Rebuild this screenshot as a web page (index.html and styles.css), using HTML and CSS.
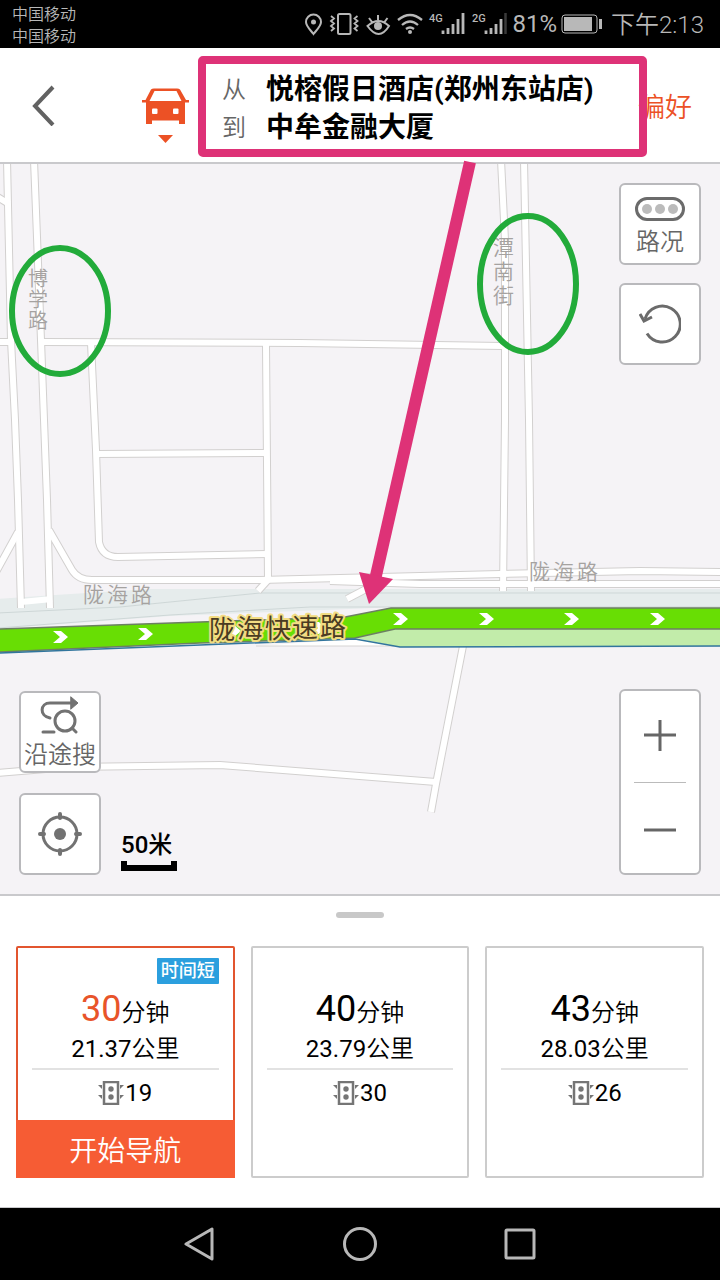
FILE: index.html
```
<!DOCTYPE html>
<html lang="zh-CN">
<head>
  <meta charset="UTF-8" />
  <meta name="viewport" content="width=device-width, initial-scale=1" />
  <title>路线规划</title>
  <link rel="stylesheet" href="styles.css">
</head>
<body>

  <div class="status-bar">
    <div class="carriers">
      <span>中国移动</span>
      <span>中国移动</span>
    </div>
    <div class="status-right">
      <svg class="status-icons" width="204" height="30" viewBox="305 9 204 30" fill="none" stroke="#b8b8b8" stroke-width="2">
        <!-- location -->
        <path d="M314.500 34C311 29.500 307 26 307 22a7.500 7.500 0 0 1 15 0c0 4-4 7.500-7.500 12z"/>
        <circle cx="314.500" cy="22" r="2.500" fill="#b8b8b8" stroke="none"/>
        <!-- vibrate -->
        <rect x="339" y="14" width="12.500" height="20" rx="1.500"/>
        <path d="M332 16l3 2.500-3 2.500 3 2.500-3 2.500 3 2.500-3 2.500M358.500 16l-3 2.500 3 2.500-3 2.500 3 2.500-3 2.500 3 2.500" stroke-width="1.800"/>
        <!-- eye protection -->
        <path d="M368.500 26q11-10 21.500 0-10 16-21.500 0zM379 15v5M370 18l3 4M388.500 18l-3 4"/>
        <circle cx="379" cy="26" r="4" fill="#b8b8b8" stroke="none"/>
        <!-- wifi -->
        <path d="M399 20q12-10 24 0M403 25q8-7 16 0M407 29q4-3 8 0" stroke-width="2.300"/>
        <circle cx="411" cy="32" r="2" fill="#b8b8b8" stroke="none"/>
        <!-- signals -->
        <path d="M444 34v-3.500M449 34v-6M454 34v-10M459 34v-15M464 34V13M487 34v-3.500M492 34v-6M497 34v-10M502 34v-15" stroke-width="2.800"/>
        <path d="M506.500 34V13" stroke="#3a3a3a" stroke-width="2.500"/>
        <text x="430" y="22">4G</text>
        <text x="473" y="22">2G</text>
      </svg>
      <span>81%</span>
      <svg class="battery" width="42" height="20" viewBox="0 0 42 20">
        <rect x="1" y="1" width="35" height="18" rx="3" fill="none" stroke="#b8b8b8"/>
        <rect x="3" y="3" width="28" height="14" fill="#b8b8b8"/>
        <path d="M39.500 5v10" stroke="#b8b8b8" stroke-width="3"/>
      </svg>
      <span class="clock">下午2:13</span>
    </div>
  </div>

  <header class="top-bar">
    <button class="icon-btn back" aria-label="返回">
      <svg width="24" height="42" viewBox="0 0 24 42"><path d="M21 3L3 22l18 19" fill="none" stroke="#626262" stroke-width="4"/></svg>
    </button>
    <button class="icon-btn" aria-label="驾车">
      <svg width="48" height="76" viewBox="0 0 48 76" fill="#ec5125">
        <path d="M9 22.500Q10 21.500 12 21.500H35q2 0 3 1L44 33h3v2.500H43V57H37V53.500H10V57H4V35.500H0V33H3.500zM12.500 24L7.500 34H39.500L34.500 24z" fill-rule="evenodd"/>
        <rect x="10" y="41.500" width="5.500" height="5.500" rx="1" fill="#fff"/>
        <rect x="31" y="41.500" width="5.500" height="5.500" rx="1" fill="#fff"/>
        <path d="M16 68H31L23.500 76z"/>
      </svg>
    </button>
    <dl class="address">
      <dt>从</dt><dd>悦榕假日酒店(郑州东站店)</dd>
      <dt>到</dt><dd>中牟金融大厦</dd>
    </dl>
    <button class="preference">偏好</button>
  </header>

  <main class="map">
    <svg class="map-canvas" viewBox="0 164 720 730" preserveAspectRatio="xMidYMid slice">
      <defs>
        <g id="roads" fill="none" stroke-linejoin="round">
          <path d="M-4 196L9 204"/>
          <path d="M7 160L11 340L15 420L18 500L21 608"/>
          <path d="M34 160L41 340L44 420L47 500L50 608"/>
          <path d="M-4 342H11M42 342L300 343L503 346"/>
          <path d="M91 343L96 450L99 542Q102 557 118 557L267 554"/>
          <path d="M266 345L268 580L258 591"/>
          <path d="M97 454L266 453"/>
          <path d="M-4 572L18 532M49 530L72 570Q78 580 92 580L260 580L500 574L640 571L724 572"/>
          <path d="M330 581L420 584H724"/>
          <path d="M501 160L505 240L505 420L503 591"/>
          <path d="M524 160L529 420L531 591"/>
          <path d="M347 599L366 589"/>
          <path d="M463 646L436 784L431 812"/>
          <path d="M-4 773L70 767L220 765L436 782"/>
        </g>
        <path id="chevron" d="M-7-6H1L8 0 1 6H-7L0 0z" fill="#fff"/>
      </defs>

      <rect x="0" y="164" width="720" height="730" fill="#f5f3f6"/>

      <!-- elevated road -->
      <path d="M-2 599L55 595L150 589H724V607H400L170 616L-2 629z" fill="#e6ecec"/>
      <path d="M-2 613L120 607L260 593L724 593M-2 628L170 615L310 607H724" fill="none" stroke="#ced7d7"/>

      <use href="#roads" stroke="#d2d0cf" stroke-width="8"/>
      <use href="#roads" stroke="#fff" stroke-width="6"/>
      <path d="M21 602L52 599" stroke="#fff" stroke-width="6"/>
      <path d="M256 646L355 639H460V646z" fill="#fff"/>
      <path d="M256 646H460" stroke="#d6d4d3"/>

      <!-- route -->
      <path d="M355 638L396 629H724V646L400 647z" fill="#c2ecaa"/>
      <path d="M-2 629L200 622L345 617L391 608H724V629H395L355 638L200 643L-2 652z" fill="#68de04" stroke="#6c7f63" stroke-width="1.500"/>
      <path d="M-2 653L200 645L355 639L400 647L724 646" fill="none" stroke="#31759d" stroke-width="1.500"/>
      <use href="#chevron" x="60" y="637"/>
      <use href="#chevron" x="145" y="634"/>
      <use href="#chevron" x="233" y="631"/>
      <use href="#chevron" x="318" y="628"/>
      <use href="#chevron" x="400" y="619"/>
      <use href="#chevron" x="486" y="619"/>
      <use href="#chevron" x="571" y="619"/>
      <use href="#chevron" x="657" y="619"/>

      <text class="road-name" x="83 107 131" y="602">陇海路</text>
      <text class="road-name" x="529 553 577" y="579">陇海路</text>
      <text class="road-name small" x="28 28 28" y="286 307 328">博学路</text>
      <text class="road-name" x="493 493 493" y="255 279 303">潭南街</text>
      <text class="highway-name" x="209 237 265 292 320" y="639 638 638 637 636">陇海快速路</text>
    </svg>

    <div class="left-tools">
      <button class="map-btn labelled">
        <svg width="40" height="38" viewBox="0 0 40 38" fill="none" stroke="#727272" stroke-width="3" stroke-linecap="round">
          <path d="M10 22C-1 20 0 7 10 7H31M3 36H14"/>
          <path d="M31 1L38 7L31 13z" fill="#727272" stroke-width="1"/>
          <circle cx="25" cy="25" r="10"/>
          <path d="M32 32L36 36"/>
        </svg>
        沿途搜
      </button>
      <button class="map-btn" aria-label="定位">
        <svg width="44" height="44" viewBox="0 0 44 44" fill="none" stroke="#727272" stroke-width="3" stroke-linecap="round">
          <circle cx="22" cy="22" r="17"/>
          <circle cx="22" cy="22" r="6" fill="#727272" stroke="none"/>
          <path d="M22 2v4M22 38v4M2 22h4M38 22h4" stroke-width="4"/>
        </svg>
      </button>
    </div>

    <div class="scale">
      <span>50米</span>
      <div class="scale-line"></div>
    </div>

    <div class="right-tools">
      <button class="map-btn labelled traffic">
        <svg width="50" height="24" viewBox="0 0 50 24">
          <rect x="1.500" y="1.500" width="47" height="21" rx="10.500" fill="none" stroke="#6b6b6b" stroke-width="3"/>
          <circle cx="12" cy="12" r="5" fill="#bbb"/>
          <circle cx="25" cy="12" r="5" fill="#bbb"/>
          <circle cx="38" cy="12" r="5" fill="#bbb"/>
        </svg>
        路况
      </button>
      <button class="map-btn" aria-label="刷新">
        <svg width="42" height="42" viewBox="0 0 42 42" fill="none" stroke="#6b6b6b" stroke-width="3">
          <path d="M8 30.500A18 18 0 1 0 6 16"/>
          <path d="M1 11L5 18L13 14"/>
        </svg>
      </button>
      <div class="zoom">
        <button class="icon-btn" aria-label="放大">
          <svg width="32" height="32" viewBox="0 0 32 32"><path d="M0 15H32M16 0V31" stroke="#666" stroke-width="3"/></svg>
        </button>
        <button class="icon-btn" aria-label="缩小">
          <svg width="32" height="32" viewBox="0 0 32 32"><path d="M0 18H32" stroke="#666" stroke-width="3"/></svg>
        </button>
      </div>
    </div>
  </main>

  <section class="panel">
    <div class="handle"></div>
    <div class="routes">
      <article class="route active">
        <span class="tag">时间短</span>
        <div class="summary">
          <p class="time"><strong>30</strong><span class="unit">分钟</span></p>
          <p class="distance">21.37<span class="unit">公里</span></p>
          <p class="lights"><svg width="26" height="24" viewBox="0 0 26 24"><use href="#light"/></svg>19</p>
        </div>
        <button class="start">开始导航</button>
      </article>
      <article class="route">
        <div class="summary">
          <p class="time"><strong>40</strong><span class="unit">分钟</span></p>
          <p class="distance">23.79<span class="unit">公里</span></p>
          <p class="lights"><svg width="26" height="24" viewBox="0 0 26 24"><use href="#light"/></svg>30</p>
        </div>
      </article>
      <article class="route">
        <div class="summary">
          <p class="time"><strong>43</strong><span class="unit">分钟</span></p>
          <p class="distance">28.03<span class="unit">公里</span></p>
          <p class="lights"><svg width="26" height="24" viewBox="0 0 26 24"><use href="#light"/></svg>26</p>
        </div>
      </article>
    </div>
    <svg class="symbols" width="0" height="0">
      <defs>
        <g id="light" fill="#757575">
          <rect x="6" y="1" width="14" height="22" fill="none" stroke="#757575" stroke-width="2.500"/>
          <circle cx="13" cy="8" r="2.700"/>
          <circle cx="13" cy="16" r="2.700"/>
          <path d="M0 4h4v4zM0 14h4v4zM26 4h-4v4zM26 14h-4v4z"/>
        </g>
      </defs>
    </svg>
  </section>

  <nav class="nav-bar">
    <button class="icon-btn" aria-label="后退">
      <svg width="34" height="34" viewBox="0 0 34 34"><path d="M29 2V32L3 17z"/></svg>
    </button>
    <button class="icon-btn" aria-label="主屏幕">
      <svg width="34" height="34" viewBox="0 0 34 34"><circle cx="17" cy="17" r="15.500"/></svg>
    </button>
    <button class="icon-btn" aria-label="最近任务">
      <svg width="34" height="34" viewBox="0 0 34 34"><rect x="3" y="3" width="28" height="28" rx="1"/></svg>
    </button>
  </nav>

  <!-- hand-drawn marks on top of the screen -->
  <svg class="marks" viewBox="0 0 720 1280" preserveAspectRatio="xMidYMin meet">
    <rect x="202" y="60" width="441" height="93" rx="1" fill="none" stroke="#de3277" stroke-width="8"/>
    <path d="M470 162L375 580" stroke="#de3277" stroke-width="12"/>
    <path d="M359 572L393 579L369 604z" fill="#de3277"/>
    <ellipse cx="60" cy="311" rx="48" ry="63" fill="none" stroke="#22ab3a" stroke-width="6"/>
    <ellipse cx="528" cy="284" rx="48" ry="68" fill="none" stroke="#22ab3a" stroke-width="6"/>
  </svg>

</body>
</html>
```
FILE: styles.css
```
* {
  box-sizing: border-box;
}

body {
  position: relative;
  display: flex;
  flex-direction: column;
  min-height: 100vh;
  margin: 0;
  background: #fff;
  color: #000;
  font-family: Roboto, "Noto Sans CJK SC", sans-serif;
  font-size: 24px;
}

button {
  margin: 0;
  padding: 0;
  border: none;
  background: none;
  color: inherit;
  font: inherit;
  cursor: pointer;
}

svg {
  display: block;
  flex-shrink: 0;
}

.icon-btn {
  display: flex;
  align-items: center;
  justify-content: center;
}

/* status bar */
.status-bar {
  display: flex;
  justify-content: space-between;
  align-items: center;
  height: 48px;
  padding: 0 16px 0 12px;
  background: #000;
  color: #b8b8b8;
}

.carriers {
  display: flex;
  flex-direction: column;
  padding-top: 4px;
  font-size: 16px;
  font-weight: 350;
  line-height: 22px;
}

.status-right {
  display: flex;
  align-items: center;
  gap: 4px;
  line-height: 30px;
}

.status-icons text {
  fill: #b8b8b8;
  stroke: none;
  font-size: 11px;
  font-weight: 500;
}

.battery {
  margin-right: 4px;
}

.clock {
  padding-top: 2px;
  font-weight: 350;
}

/* header */
.top-bar {
  display: grid;
  grid-template-columns: 78px 48px 1fr auto;
  gap: 32px;
  align-items: center;
  height: 116px;
  padding: 0 28px 0 32px;
  border-bottom: 2px solid #c9c9cc;
}

.back {
  justify-content: flex-start;
}

.address {
  display: grid;
  grid-template-columns: 24px 1fr;
  column-gap: 20px;
  margin: 0;
  padding-top: 8px;
  line-height: 38px;
}

.address dt {
  color: #666;
  font-weight: 350;
}

.address dd {
  margin: 0;
  font-size: 28px;
  font-weight: 700;
  white-space: nowrap;
}

.preference {
  color: #ec5125;
  font-size: 27px;
  font-weight: 350;
}

/* map */
.map {
  position: relative;
  display: flex;
  flex: 1;
  min-height: 600px;
  padding: 19px;
  background: #f5f3f6;
}

.map-canvas {
  position: absolute;
  inset: 0;
  width: 100%;
  height: 100%;
}

.road-name {
  fill: #a5a2a0;
  font-size: 21px;
  font-weight: 350;
}

.road-name.small {
  font-size: 20px;
}

.highway-name {
  fill: #4a3b22;
  stroke: #f2dc83;
  stroke-width: 4px;
  stroke-linejoin: round;
  paint-order: stroke;
  font-size: 26px;
}

.left-tools,
.right-tools,
.scale {
  position: relative;
  display: flex;
  flex-direction: column;
}

.left-tools {
  justify-content: flex-end;
  gap: 20px;
}

.right-tools {
  gap: 18px;
  margin-left: auto;
}

.map-btn {
  display: flex;
  flex-direction: column;
  align-items: center;
  justify-content: center;
  width: 82px;
  height: 82px;
  border: 2px solid #b9b9bc;
  border-radius: 6px;
  background: #fff;
  color: #666;
  font-weight: 350;
  line-height: 34px;
}

.map-btn.labelled {
  gap: 4px;
  padding-top: 4px;
}

.map-btn.traffic {
  padding-top: 8px;
}

.scale {
  justify-content: flex-end;
  margin-left: 20px;
  padding-bottom: 4px;
  font-weight: 500;
  line-height: 32px;
}

.scale-line {
  width: 56px;
  height: 10px;
  border: solid #000;
  border-width: 0 6px 6px;
}

.zoom {
  display: flex;
  flex-direction: column;
  width: 82px;
  height: 186px;
  margin-top: auto;
  padding: 0 13px;
  border: 2px solid #b9b9bc;
  border-radius: 6px;
  background: #fff;
}

.zoom .icon-btn {
  flex: 1;
}

.zoom .icon-btn + .icon-btn {
  border-top: 1px solid #bbb;
}

/* route panel */
.panel {
  padding: 16px 16px 29px;
  border-top: 2px solid #c9c9cc;
  border-bottom: 1px solid #c9c9cc;
}

.handle {
  width: 48px;
  height: 6px;
  margin: 0 auto 28px;
  border-radius: 3px;
  background: #c8c8c8;
}

.routes {
  display: grid;
  grid-template-columns: repeat(3, 1fr);
  gap: 16px;
}

.route {
  position: relative;
  display: flex;
  flex-direction: column;
  min-height: 232px;
  border: 2px solid #ccc;
  border-radius: 2px;
  text-align: center;
}

.route.active {
  border-color: #e2552f;
}

.tag {
  position: absolute;
  top: 10px;
  right: 14px;
  padding: 0 4px;
  border-radius: 1px;
  background: #2b9fde;
  color: #fff;
  font-size: 18px;
  font-weight: 500;
  line-height: 26px;
}

.summary {
  flex: 1;
  padding: 40px 14px 0;
}

.summary p {
  margin: 0;
}

.unit {
  font-weight: 350;
}

.time {
  line-height: 42px;
}

.time strong {
  font-size: 36px;
  font-weight: 400;
}

.active .time strong {
  color: #e8542a;
}

.distance {
  padding-bottom: 4px;
  border-bottom: 2px solid #e2e2e2;
  line-height: 30px;
}

.lights {
  display: flex;
  align-items: center;
  justify-content: center;
  gap: 1px;
  line-height: 46px;
}

.start {
  height: 56px;
  background: #f65c34;
  color: #fff;
  font-size: 28px;
  font-weight: 350;
}

.route.active .start {
  margin: 0 -2px -2px;
  height: 58px;
}

.symbols {
  position: absolute;
}

/* system navigation */
.nav-bar {
  display: flex;
  justify-content: center;
  height: 72px;
  background: #000;
}

.nav-bar .icon-btn {
  width: 160px;
}

.nav-bar svg {
  fill: none;
  stroke: #b8b8b8;
  stroke-width: 3px;
  stroke-linejoin: round;
}

.marks {
  position: absolute;
  top: 0;
  left: 0;
  width: 100%;
  pointer-events: none;
}
```
